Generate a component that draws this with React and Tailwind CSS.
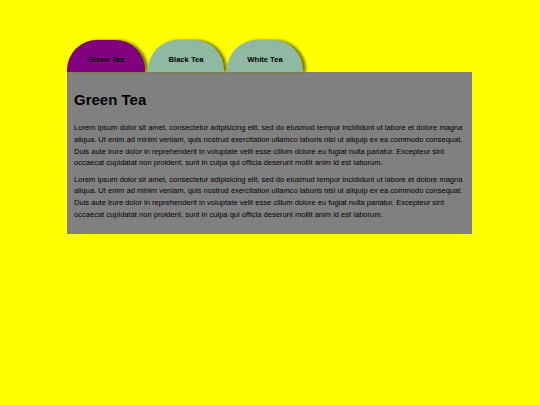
export default function App() {
  const lorem =
    "Lorem ipsum dolor sit amet, consectetur adipisicing elit, sed do eiusmod tempor incididunt ut labore et dolore magna aliqua. Ut enim ad minim veniam, quis nostrud exercitation ullamco laboris nisi ut aliquip ex ea commodo consequat. Duis aute irure dolor in reprehenderit in voluptate velit esse cillum dolore eu fugiat nulla pariatur. Excepteur sint occaecat cupidatat non proident, sunt in culpa qui officia deserunt mollit anim id est laborum.";
  const tabs = [
    { name: "Green Tea", active: true, w: "w-[78px]" },
    { name: "Black Tea", w: "w-[76px]" },
    { name: "White Tea", w: "w-[76px]" },
  ];
  return (
    <div
      className="w-[540px] h-[405px] bg-[#ffff00] pt-[40px] pl-[67px]"
      style={{ fontFamily: '"Liberation Sans", Arial, sans-serif' }}
    >
      <div className="flex gap-[3px] h-[32px]">
        {tabs.map((t) => (
          <div
            key={t.name}
            className={`${t.w} h-[32px] rounded-t-[30px] flex items-center justify-center pt-[7px] text-[7.6px] font-bold text-black shadow-[3px_0_3px_#7a7a00] ${
              t.active ? "bg-[#800080]" : "bg-[#90b9a3]"
            }`}
          >
            {t.name}
          </div>
        ))}
      </div>
      <div className="w-[405px] h-[162px] bg-[#808080] px-[7px] pt-[18px] text-black">
        <h1 className="text-[15px] font-bold leading-[20px] mb-[12px]">Green Tea</h1>
        <p className="text-[7.55px] leading-[11.75px] mb-[4.5px]">{lorem}</p>
        <p className="text-[7.55px] leading-[11.75px]">{lorem}</p>
      </div>
    </div>
  );
}
